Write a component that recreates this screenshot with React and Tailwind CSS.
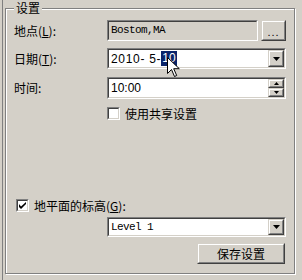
import React from 'react'

const cjk = { fontFamily: '"Noto Sans CJK SC", "Liberation Sans", sans-serif' }
const mono = { fontFamily: '"Liberation Mono", monospace' }
const sans = { fontFamily: '"Liberation Sans", "Noto Sans CJK SC", sans-serif' }

// sunken 3d edge (text boxes, checkboxes)
const Sunken = ({ className = '', inner = 'bg-white', children }) => (
  <div className={`border border-t-[#808080] border-l-[#808080] border-r-white border-b-white ${className}`}>
    <div className={`h-full w-full border border-t-[#404040] border-l-[#404040] border-r-[#d4d0c8] border-b-[#d4d0c8] ${inner}`}>
      {children}
    </div>
  </div>
)

// raised 3d edge (buttons)
const Raised = ({ className = '', children }) => (
  <div className={`border border-t-[#d4d0c8] border-l-[#d4d0c8] border-r-[#404040] border-b-[#404040] ${className}`}>
    <div className="h-full w-full border border-t-white border-l-white border-r-[#808080] border-b-[#808080] bg-[#d4d0c8] flex items-center justify-center">
      {children}
    </div>
  </div>
)

const DownArrow = () => (
  <svg width="7" height="4" viewBox="0 0 7 4"><path d="M0 0h7L3.5 4z" fill="#000" /></svg>
)

const DropButton = () => (
  <Raised className="w-[16px] h-full">
    <DownArrow />
  </Raised>
)

const Label = ({ children, className = '' }) => (
  <span className={`text-[12px] leading-none text-black whitespace-nowrap ${className}`} style={cjk}>
    {children}
  </span>
)

const Check = ({ checked }) => (
  <Sunken className="w-[13px] h-[13px] shrink-0" inner="bg-white flex items-center justify-center">
    {checked && (
      <svg width="7" height="7" viewBox="0 0 7 7">
        <path d="M0 2v3l2 2 5-5V-0L2 4.5z" fill="#000" />
      </svg>
    )}
  </Sunken>
)

const Cursor = () => (
  <svg className="absolute left-[167px] top-[57px]" width="13" height="21" viewBox="0 0 13 21">
    <path d="M0.5 0.5v16l4-4 3 7 2.2-1-3-6.8h5.6z" fill="#fff" stroke="#000" strokeWidth="1" />
  </svg>
)

export default function App() {
  return (
    <div className="relative w-[302px] h-[280px] bg-[#d4d0c8] overflow-hidden pl-[2px]">
      <div className="h-full border-l border-[#808080] pl-[2px] pt-[8px]">
        <div className="relative w-[290px] h-[266px] border border-[#808080] shadow-[inset_1px_1px_0_#fff,1px_1px_0_#fff]">
          <span className="absolute left-[8px] top-[-7px] px-[2px] bg-[#d4d0c8] text-[12px] leading-none" style={cjk}>
            设置
          </span>

          <div className="flex flex-col">
            {/* location */}
            <div className="flex items-center h-[21px] mt-[11px]">
              <Label className="w-[93px] ml-[8px]">地点(<u>L</u>):</Label>
              <Sunken className="w-[151px] h-full" inner="bg-[#d4d0c8] flex items-center pl-[2px]">
                <span className="text-[11px] tracking-[-0.6px] text-black" style={mono}>Bostom,MA</span>
              </Sunken>
              <Raised className="w-[25px] h-full ml-[3px]">
                <span className="text-[11px] leading-none tracking-[1px] pt-[3px]" style={sans}>...</span>
              </Raised>
            </div>

            {/* date */}
            <div className="flex items-center h-[21px] mt-[7px]">
              <Label className="w-[93px] ml-[8px]">日期(<u>T</u>):</Label>
              <Sunken className="w-[179px] h-full" inner="bg-white flex items-center">
                <div className="flex-1 flex items-center pl-[2px] text-[12px] text-black" style={sans}>
                  <span className="tracking-[0.7px]">2010- 5-</span>
                  <span className="bg-[#0a246a] text-white leading-[15px] px-[1px]">10</span>
                </div>
                <DropButton />
              </Sunken>
            </div>

            {/* time */}
            <div className="flex items-center h-[22px] mt-[8px]">
              <Label className="w-[93px] ml-[8px]">时间:</Label>
              <Sunken className="w-[179px] h-full" inner="bg-white flex items-center">
                <span className="flex-1 pl-[2px] text-[12px] text-black" style={sans}>10:00</span>
                <div className="h-full flex flex-col">
                  <Raised className="w-[16px] h-[9px]">
                    <svg width="5" height="3" viewBox="0 0 5 3"><path d="M2.5 0L5 3H0z" fill="#000" /></svg>
                  </Raised>
                  <Raised className="w-[16px] h-[9px]">
                    <svg width="5" height="3" viewBox="0 0 5 3"><path d="M0 0h5L2.5 3z" fill="#000" /></svg>
                  </Raised>
                </div>
              </Sunken>
            </div>

            {/* shared settings */}
            <div className="flex items-center h-[13px] mt-[8px] ml-[101px]">
              <Check />
              <Label className="ml-[5px]">使用共享设置</Label>
            </div>

            {/* ground level */}
            <div className="flex items-center h-[13px] mt-[79px] ml-[10px]">
              <Check checked />
              <Label className="ml-[5px]">地平面的标高(<u>G</u>):</Label>
            </div>

            <div className="flex h-[20px] mt-[5px] ml-[101px]">
              <Sunken className="w-[179px] h-full" inner="bg-white flex items-center">
                <span className="flex-1 pl-[2px] text-[11px] tracking-[-0.6px] text-black" style={mono}>Level 1</span>
                <DropButton />
              </Sunken>
            </div>

            <div className="flex justify-end mt-[6px] mr-[9px]">
              <Raised className="w-[88px] h-[21px]">
                <span className="text-[12px] leading-none text-black" style={cjk}>保存设置</span>
              </Raised>
            </div>
          </div>
        </div>
      </div>
      <Cursor />
    </div>
  )
}
